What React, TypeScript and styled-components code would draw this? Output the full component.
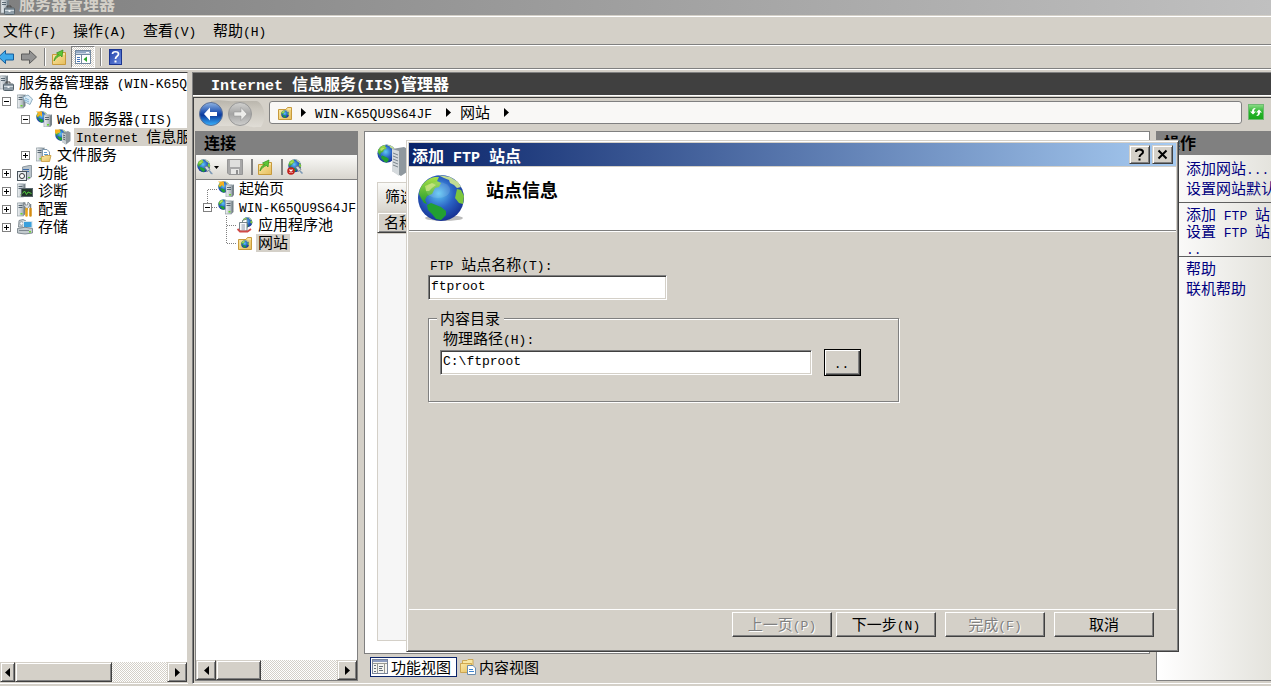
import React from "react";
import styled, { createGlobalStyle, css } from "styled-components";

const face = "#d4d0c8";
const cjk = `"Noto Sans CJK SC", sans-serif`;

const GlobalStyle = createGlobalStyle`
  *, *::before, *::after { box-sizing: border-box; }
  html, body { margin: 0; height: 100%; overflow: hidden; background: ${face}; }
  #root { height: 100%; }
  svg { display: block; flex: none; }
  button, input { font: inherit; color: inherit; margin: 0; border-radius: 0; }
  ul { list-style: none; margin: 0; padding: 0; }
`;

const raised = css`
  border: 1px solid;
  border-color: ${face} #404040 #404040 ${face};
  box-shadow: inset 1px 1px #fff, inset -1px -1px #808080;
`;

const Window = styled.div`
  position: relative;
  display: flex;
  flex-direction: column;
  height: 100vh;
  min-width: 900px;
  background: ${face};
  color: #000;
  font: 15px/18px ${cjk};
  overflow: hidden;
  white-space: pre;
`;

const Latin = styled.span`
  font-family: "Liberation Mono", monospace;
  font-size: 13px;
  line-height: 0;
`;

/* Western runs are set smaller than the Chinese ones, two to one em square. */
function T({ children }: { children: string }) {
  return (
    <span>
      {children.split(/([\u0020-\u007e]+)/).map((part, i) =>
        i % 2 ? <Latin key={i}>{part}</Latin> : part
      )}
    </span>
  );
}

/* ---------- icons ---------- */

const Defs = () => (
  <svg width="0" height="0" aria-hidden="true">
    <defs>
      <radialGradient id="sea" cx="0.45" cy="0.4" r="0.65">
        <stop offset="0" stopColor="#5fc8f4" />
        <stop offset="0.5" stopColor="#2a62c4" />
        <stop offset="1" stopColor="#142a8c" />
      </radialGradient>
      <linearGradient id="land" x1="0" y1="0" x2="0" y2="1">
        <stop offset="0" stopColor="#a8e048" />
        <stop offset="1" stopColor="#1f9a2c" />
      </linearGradient>
      <linearGradient id="metal" x1="0" y1="0" x2="1" y2="0">
        <stop offset="0" stopColor="#f0f3f5" />
        <stop offset="1" stopColor="#a3adb4" />
      </linearGradient>
      <linearGradient id="manila" x1="0" y1="0" x2="1" y2="1">
        <stop offset="0" stopColor="#fbeaa8" />
        <stop offset="1" stopColor="#e6bd5c" />
      </linearGradient>
      <linearGradient id="blueBall" x1="0" y1="0" x2="0" y2="1">
        <stop offset="0" stopColor="#8fb4e4" />
        <stop offset="0.45" stopColor="#1d4fae" />
        <stop offset="0.55" stopColor="#0c3a9c" />
        <stop offset="1" stopColor="#38b4ff" />
      </linearGradient>
      <linearGradient id="grayBall" x1="0" y1="0" x2="0" y2="1">
        <stop offset="0" stopColor="#d2d2d0" />
        <stop offset="0.5" stopColor="#a4a4a4" />
        <stop offset="1" stopColor="#cfcfcd" />
      </linearGradient>
      <linearGradient id="rail" x1="0" y1="0" x2="0" y2="1">
        <stop offset="0" stopColor="#b9b5ac" />
        <stop offset="0.3" stopColor="#c9c5bc" />
        <stop offset="1" stopColor="#e0ddd6" />
      </linearGradient>
      <linearGradient id="leaf" x1="0" y1="0" x2="0" y2="1">
        <stop offset="0" stopColor="#8fdd8a" />
        <stop offset="0.5" stopColor="#27b52b" />
        <stop offset="1" stopColor="#19a81a" />
      </linearGradient>
      <linearGradient id="help" x1="0" y1="0" x2="1" y2="1">
        <stop offset="0" stopColor="#2140a8" />
        <stop offset="1" stopColor="#6b8be0" />
      </linearGradient>
    </defs>
  </svg>
);

/* Globe of radius 23 around 24,24; callers scale it down. */
const GlobeArt = () => (
  <g>
    <circle cx="24" cy="24" r="23" fill="url(#sea)" />
    <path
      d="M3 15 C6 8 12 4 18 3 L22 3 L20 7 L24 9 L22 13 L18 14 L15 20 L10 22 L8 26 L10 30 L7 29 L4 24 L2 20 Z"
      fill="url(#land)"
    />
    <path d="M8 12 L15 9 L19 11 L15 14 L12 17 L9 17 Z" fill="#d0e67c" opacity="0.7" />
    <path d="M21 1 L33 3 L41 8 L44 13 L40 14 L37 11 L33 9 L32 6 L27 4 Z" fill="#c2dc94" />
    <path d="M10 31 L14 29 L19 31 L24 33 L29 37 L29 41 L24 46 L19 45 L15 40 L11 36 Z" fill="#22a032" />
    <path d="M40 15 L44 16 L47 22 L46 30 L42 29 L38 24 Z" fill="#7cc63e" />
  </g>
);

const globe = (x: number, y: number, scale: number) => (
  <g transform={`translate(${x} ${y}) scale(${scale})`}>
    <GlobeArt />
  </g>
);

const tower = (x: number, y: number, h = 13) => (
  <g transform={`translate(${x} ${y})`}>
    <path d="M0 1 L2 0 H8 V1 L7 2 H0Z" fill="#dfe4e7" />
    <rect x="0" y="1" width="6" height={h - 1} fill="url(#metal)" stroke="#8b969d" strokeWidth="0.600" />
    <path d={`M6 1.500 L8 0.500 V${h - 2} L6 ${h}Z`} fill="#78838a" />
    <path d="M1 3.500 H5 M1 5.500 H5" stroke="#4c5b68" strokeWidth="0.900" />
    <rect x="3" y={h - 3} width="2" height="1.500" fill="#6ad62e" />
  </g>
);

const folder = (x: number, y: number) => (
  <g transform={`translate(${x} ${y})`}>
    <path d="M0.500 2.500 H8 L9.500 0.500 H13.500 V12.500 H0.500 Z" fill="url(#manila)" stroke="#c79a3c" />
    <path d="M9.500 2 H13" stroke="#fff3c4" />
  </g>
);

const art: Record<string, React.ReactNode> = {
  manager: (
    <>
      {tower(2, 0, 14)}
      <path d="M8 8.500 V7 H12 V8.500" fill="none" stroke="#444" />
      <rect x="5.500" y="9" width="10" height="6.500" rx="1" fill="#8e9ca6" stroke="#56636b" />
      <path d="M6 11.500 H15" stroke="#cfd8de" />
      <rect x="9.500" y="11" width="2" height="2" fill="#eef2f4" />
    </>
  ),
  roles: (
    <>
      {tower(0.5, 1, 14)}
      <path d="M6 4 L11 2 L15.500 6 L13 11.500 L8 9 Z" fill="#dcecf6" stroke="#7a9db4" strokeWidth="0.800" />
      <path d="M8 5 L12 7 M8 7 L12 9" stroke="#6aa6cc" strokeWidth="0.800" />
    </>
  ),
  web: (
    <>
      {globe(0, 0, 0.25)}
      <path d="M0 0.500 H6 V6 L4 4 L2 6 L0.500 4.500 L2.500 2.500 Z" fill="#f6b020" />
      {tower(8, 3, 13)}
    </>
  ),
  iis: (
    <>
      {globe(0, 0, 0.25)}
      <path d="M0 0.500 H5 V4 L3.500 3 L1.500 5 L0 4Z" fill="#f6b020" />
      <path d="M7 4 L13 2 L15.500 3.500 V12 L11 15.500 L7 13 Z" fill="#8c969c" />
      <path d="M7 4 L11 5.500 V15.500 L7 13 Z" fill="#c9d0d4" />
      <path d="M8 6 L10.500 7 M8 8 L10.500 9 M8 10 L10.500 11" stroke="#56616a" />
    </>
  ),
  files: (
    <>
      {tower(0.5, 0, 14)}
      <path d="M6.500 2.500 H11 L13.500 5 V11 H6.500Z" fill="#fff" stroke="#7f97ad" />
      <path d="M8 5.500 H11 M8 7.500 H12" stroke="#5f9ad0" />
      <path d="M5.500 9.500 H8 L9 8.500 H15 L13.500 14.500 H5.500Z" fill="url(#manila)" stroke="#c79a3c" strokeWidth="0.800" />
    </>
  ),
  features: (
    <>
      <path d="M5.500 2 L12 0.500 H14.500 V12 L12 14 H5.500Z" fill="#b9c3ca" stroke="#7c8890" strokeWidth="0.800" />
      <path d="M6 4.500 H12 M6 6.500 H12" stroke="#3d6ba8" />
      <rect x="0.500" y="6.500" width="9" height="9" fill="#e6ebee" stroke="#4a545c" />
      <circle cx="5" cy="11" r="2.500" fill="#fff" stroke="#333" />
      <path d="M11 12.500 H13" stroke="#4dc63a" />
    </>
  ),
  diagnostics: (
    <>
      {tower(0.5, 0, 14)}
      <rect x="4.500" y="5.500" width="11" height="8" fill="#22362a" stroke="#59656c" />
      <path d="M5.500 10.500 L7.500 8 L9.500 11.500 L11 9 L14.500 10.500" fill="none" stroke="#55cf3f" />
    </>
  ),
  config: (
    <>
      {tower(0.5, 1, 14)}
      <path d="M7 1 L8 4 L10.500 4 L11 1 L13 3 L12 6 L10.500 7 V9 H8.500 V6.500 L6.500 4Z" fill="#dfe3e6" stroke="#6d777e" strokeWidth="0.700" />
      <path d="M9.500 8 V14.500" stroke="#e8a417" strokeWidth="2.500" strokeLinecap="round" />
      <path d="M13.500 3 V8" stroke="#7a848a" strokeWidth="1.500" />
      <path d="M13.500 8 V14.500" stroke="#d48c12" strokeWidth="2.500" strokeLinecap="round" />
    </>
  ),
  storage: (
    <>
      <path d="M2 1.500 L6 0.500 L9 2 V8 H1.500Z" fill="#cfd6da" stroke="#6d7880" strokeWidth="0.800" />
      <circle cx="4.500" cy="4.500" r="1.800" fill="#f4f6f7" stroke="#7d888f" strokeWidth="0.700" />
      <rect x="6.500" y="2.500" width="8.500" height="6" fill="#3aa0dc" stroke="#d8e4ea" />
      <path d="M0.500 9.500 Q8 7 15.500 9.500 V14 Q8 16 0.500 14Z" fill="#c4cbcf" stroke="#6d7880" strokeWidth="0.800" />
      <path d="M2 11.500 H12" stroke="#7d888f" />
      <rect x="12" y="12" width="2" height="1.500" fill="#6ad62e" />
    </>
  ),
  server: (
    <>
      {globe(0, 0, 0.23)}
      {tower(7.5, 1, 14)}
    </>
  ),
  pools: (
    <>
      {globe(5, 0, 0.22)}
      <path d="M5.500 3.500 L10 2 V11 H5.500Z" fill="#fff" stroke="#6a7880" strokeWidth="0.800" />
      <path d="M2.500 5.500 H10 V14 H2.500Z" fill="#f8fafb" stroke="#6a7880" strokeWidth="0.900" />
      <path d="M4.500 8 H8 M4.500 10 H8 M4.500 12 H8" stroke="#7f8aa0" strokeWidth="0.900" />
      <path d="M0.500 12 L3 14.500 H10.500 L14 12" fill="none" stroke="#d04a48" strokeWidth="1.800" />
    </>
  ),
  sites: (
    <>
      {folder(1, 2)}
      {globe(4, 5, 0.17)}
    </>
  ),
  up: (
    <>
      {folder(1, 3)}
      <path d="M3 12 C3.500 8.500 5 6.500 7.500 5.500 L5.500 4 L12 1 L11 8 L9.500 6.500 C6.500 7.500 5 9 3 12Z" fill="#5fc535" stroke="#2f9018" strokeWidth="0.700" />
    </>
  ),
  connect: (
    <>
      {globe(0, 0, 0.28)}
      <path d="M7.500 8 L10 7 L13 10.500 L10.500 12.500Z" fill="#cdd4d9" stroke="#6d7880" strokeWidth="0.800" />
      <path d="M12 12 C14 11.500 13 15 15.500 14.500" fill="none" stroke="#7b98b4" strokeWidth="1.500" />
    </>
  ),
  disconnect: (
    <>
      {globe(1, 0, 0.28)}
      <path d="M8.500 8 L11 7 L14 10.500 L11.500 12.500Z" fill="#cdd4d9" stroke="#6d7880" strokeWidth="0.800" />
      <path d="M13 12 L15.500 14.500" stroke="#7b98b4" strokeWidth="1.500" />
      <circle cx="4" cy="12" r="3.800" fill="#c4201c" />
      <path d="M2.500 10.500 L5.500 13.500 M5.500 10.500 L2.500 13.500" stroke="#fff" strokeWidth="1.200" />
    </>
  ),
  save: (
    <>
      <path d="M0.500 0.500 H15.500 V15.500 H2 L0.500 14Z" fill="#a8a8a8" stroke="#969696" />
      <rect x="3" y="1" width="10" height="7" fill="#e0e0de" />
      <rect x="4" y="10" width="8" height="5" fill="#e8e8e6" />
      <rect x="9" y="11" width="2" height="4" fill="#8f8f8f" />
    </>
  ),
  back: (
    <path d="M0.500 8 L7.500 1.500 V5 H15.500 V11 H7.500 V14.500Z" fill="#3fa9ea" stroke="#175f9c" />
  ),
  forward: (
    <path d="M15.500 8 L8.500 1.500 V5 H0.500 V11 H8.500 V14.500Z" fill="#939393" stroke="#5d5d5d" />
  ),
  pane: (
    <>
      <rect x="0.500" y="1.500" width="15" height="13" fill="#fff" stroke="#7389a0" />
      <rect x="1" y="2" width="14" height="2.500" fill="#93a9c4" />
      <path d="M11 3.500 H14" stroke="#fff" />
      <path d="M6.500 6 V14" stroke="#7389a0" />
      <path d="M1 5.500 H15" stroke="#7389a0" />
      <path d="M2 8.500 H5 M2 10.500 H5 M2 12.500 H5" stroke="#4473b8" />
      <path d="M12 7.500 V13 L8.500 10.250Z" fill="#2aa52c" />
    </>
  ),
  refresh: (
    <>
      <rect x="0.500" y="0.500" width="15" height="15" fill="url(#leaf)" stroke="#6fb972" />
      <path d="M2 7.500 L5 10.500 L8 7.500 H6 C6 5.500 7 4.500 8 4 C5.500 3.500 4 5 4 7.500Z" fill="#fff" />
      <path d="M14 8.500 L11 5.500 L8 8.500 H10 C10 10.500 9 11.500 8 12 C10.500 12.500 12 11 12 8.500Z" fill="#fff" />
    </>
  ),
  featureView: (
    <>
      <rect x="0.500" y="0.500" width="15" height="14" fill="#f4f4f0" stroke="#77839a" />
      <path d="M1 2 H15" stroke="#8d9cc0" strokeWidth="2" />
      <path d="M1 4.500 H15 M5.500 5 V14 M12.500 5 V14" stroke="#9a9a94" />
      <path d="M2 6.500 H4 M2 9.500 H4 M2 12.500 H4 M7 7.500 H11 M7 9.500 H10 M7 11.500 H11" stroke="#66717c" />
    </>
  ),
  contentView: (
    <>
      <path d="M2.500 1.500 H7 L8 0.500 H13 V8 H2.500Z" fill="#f8e7a4" stroke="#c79a3c" strokeWidth="0.800" />
      <path d="M0.500 4.500 H11.500 V13.500 H0.500Z" fill="url(#manila)" stroke="#c79a3c" strokeWidth="0.800" />
      <path d="M7.500 6.500 H13 L15.500 9 V15.500 H7.500Z" fill="#fff" stroke="#6a8cae" />
      <path d="M9 10.500 H13 M9 12.500 H14" stroke="#3f86d0" />
    </>
  ),
};

function Icon({ name, clipLeft = 0 }: { name: string; clipLeft?: number }) {
  return (
    <svg width={16 - clipLeft} height="16" viewBox={`${clipLeft} 0 ${16 - clipLeft} 16`} aria-hidden="true">
      {art[name]}
    </svg>
  );
}

const Triangle = ({ dir }: { dir: "left" | "right" | "down" }) => (
  <svg width="7" height="9" viewBox="0 0 7 9" aria-hidden="true">
    <path
      d={dir === "left" ? "M6 0 V9 L1 4.500Z" : dir === "right" ? "M1 0 V9 L6 4.500Z" : "M1 3 H6 L3.500 6Z"}
      fill="#000"
    />
  </svg>
);

/* ---------- window frame ---------- */

const TitleBar = styled.header`
  display: flex;
  align-items: flex-end;
  gap: 4px;
  flex: none;
  height: 15px;
  overflow: hidden;
  background: linear-gradient(90deg, #808080, #c0c0c0);
  color: ${face};
  font-size: 16px;
  font-weight: bold;
  line-height: 24px;
`;

const MenuBar = styled.nav`
  display: flex;
  align-items: center;
  gap: 16px;
  flex: none;
  height: 29px;
  margin-top: 1px;
  padding: 0 0 2px 3px;
  border-top: 1px solid #fff;
  border-bottom: 1px solid #808080;
`;

const PlainButton = styled.button`
  display: flex;
  align-items: center;
  padding: 0;
  border: 0;
  background: none;
`;

const MenuItem = styled(PlainButton)`
  min-width: 54px;
`;

const ToolBar = styled.div`
  display: flex;
  align-items: center;
  flex: none;
  height: 24px;
  border-top: 1px solid #fff;
  border-bottom: 1px solid #808080;
`;

const Group = styled.div<{ $gap?: number; $pad?: number }>`
  display: flex;
  align-items: center;
  gap: ${(p) => p.$gap ?? 4}px;
  padding: 0 ${(p) => p.$pad ?? 7}px;
  &:first-child { padding-left: 0; }
`;

const Divider = styled.i`
  width: 2px;
  height: 18px;
  border-left: 1px solid #808080;
  border-right: 1px solid #fff;
`;

const PressedButton = styled(PlainButton)`
  justify-content: center;
  width: 24px;
  height: 22px;
  border: 1px solid;
  border-color: #808080 #fff #fff #808080;
  background: conic-gradient(#fff 25%, ${face} 0 50%, #fff 0 75%, ${face} 0) 0 0 / 2px 2px;
`;

const Workspace = styled.div`
  display: flex;
  flex: 1;
  gap: 4px;
  min-height: 0;
  padding: 2px 0;
  border-top: 1px solid #fff;
`;

/* ---------- trees ---------- */

const TreePane = styled.aside`
  display: flex;
  flex-direction: column;
  flex: none;
  width: 188px;
  margin-bottom: 1px;
  padding-top: 1px;
  border: solid;
  border-width: 1px 1px 1px 0;
  border-color: #404040 ${face} ${face} ${face};
  box-shadow: 0 1px #fff;
  background: #fff;
`;

const Tree = styled.ul`
  flex: 1;
  min-height: 0;
  overflow: hidden;
`;

const TreeRow = styled.li<{ $indent: number }>`
  display: flex;
  align-items: center;
  height: 18px;
  padding-left: ${(p) => p.$indent}px;
  overflow: hidden;
`;

const Handle = styled.span`
  flex: none;
  width: 15px;
`;

const Label = styled.span<{ $selected?: boolean }>`
  height: 18px;
  margin-left: 3px;
  padding: 0 2px;
  background: ${(p) => (p.$selected ? face : "transparent")};
  line-height: 15px;
`;

type Line = "none" | "start" | "middle" | "end";

function TreeHandle({ box, line = "none" }: { box?: "+" | "-"; line?: Line }) {
  return (
    <Handle>
      <svg width="15" height="18" viewBox="0 0 15 18" aria-hidden="true">
        <g stroke="#808080" strokeDasharray="1 1" fill="none">
          {line !== "none" && <path d="M5 9.500 H15" />}
          {(line === "start" || line === "middle") && <path d="M4.500 10 V18" />}
          {(line === "middle" || line === "end") && <path d="M4.500 0 V9" />}
        </g>
        {box && (
          <>
            <rect x="0.500" y="5.500" width="8" height="8" fill="#fff" stroke="#808080" />
            <path d="M2 9.500 H7" stroke="#000" />
            {box === "+" && <path d="M4.500 7 V12" stroke="#000" />}
          </>
        )}
      </svg>
    </Handle>
  );
}

interface Node {
  text: string;
  icon: string;
  depth: number;
  box?: "+" | "-";
  line?: Line;
  selected?: boolean;
}

const serverTree: Node[] = [
  { text: "角色", icon: "roles", depth: 0, box: "-" },
  { text: "Web 服务器(IIS)", icon: "web", depth: 1, box: "-" },
  { text: "Internet 信息服", icon: "iis", depth: 2, selected: true },
  { text: "文件服务", icon: "files", depth: 1, box: "+" },
  { text: "功能", icon: "features", depth: 0, box: "+" },
  { text: "诊断", icon: "diagnostics", depth: 0, box: "+" },
  { text: "配置", icon: "config", depth: 0, box: "+" },
  { text: "存储", icon: "storage", depth: 0, box: "+" },
];

const siteTree: Node[] = [
  { text: "起始页", icon: "web", depth: 0, line: "start" },
  { text: "WIN-K65QU9S64JF", icon: "server", depth: 0, box: "-", line: "end" },
  { text: "应用程序池", icon: "pools", depth: 1, line: "middle" },
  { text: "网站", icon: "sites", depth: 1, line: "end", selected: true },
];

function Nodes({ items, base }: { items: Node[]; base: number }) {
  return (
    <>
      {items.map((n) => (
        <TreeRow key={n.text} $indent={base + n.depth * 19}>
          <TreeHandle box={n.box} line={n.line} />
          <Icon name={n.icon} />
          <Label $selected={n.selected}>
            <T>{n.text}</T>
          </Label>
        </TreeRow>
      ))}
    </>
  );
}

/* ---------- scroll bars ---------- */

const ScrollTrack = styled.div`
  display: flex;
  flex: none;
  height: 20px;
  background: conic-gradient(#fff 25%, ${face} 0 50%, #fff 0 75%, ${face} 0) 0 0 / 2px 2px;
`;

const ScrollButton = styled(PlainButton)<{ $width?: number }>`
  justify-content: center;
  width: ${(p) => p.$width ?? 20}px;
  background: ${face};
  ${raised}
`;

const ScrollThumb = styled.div<{ $share: number }>`
  width: ${(p) => p.$share}%;
  background: ${face};
  ${raised}
`;

const Spacer = styled.div`
  flex: 1;
`;

function ScrollBar({ share, first }: { share: number; first?: number }) {
  return (
    <ScrollTrack>
      <ScrollButton $width={first} aria-label="向左滚动"><Triangle dir="left" /></ScrollButton>
      <ScrollThumb $share={share} />
      <Spacer />
      <ScrollButton aria-label="向右滚动"><Triangle dir="right" /></ScrollButton>
    </ScrollTrack>
  );
}

/* ---------- IIS manager ---------- */

const Manager = styled.main`
  display: flex;
  flex-direction: column;
  flex: 1;
  min-width: 0;
  border: 1px solid #808080;
  border-width: 1px 0 0 1px;
  border-bottom: 1px solid #fff;
`;

const ManagerTitle = styled.h1`
  flex: none;
  height: 23px;
  margin: 0;
  padding-left: 18px;
  border-bottom: 1px solid #fff;
  background: #404040;
  color: #fff;
  font-size: 16px;
  font-weight: bold;
  line-height: 20px;
  ${Latin} { font-size: 15px; }
`;

const ManagerBody = styled.div`
  display: flex;
  flex-direction: column;
  flex: 1;
  min-height: 0;
  margin-top: 1px;
  padding: 0 0 2px 1px;
  border: solid #404040;
  border-width: 1px 0 0 1px;
`;

const NavBar = styled.div`
  display: flex;
  align-items: center;
  flex: none;
  height: 33px;
  padding: 0 7px 0 4px;
`;

const Address = styled.div`
  display: flex;
  align-items: center;
  flex: 1;
  height: 23px;
  margin: 0 6px 4px 2px;
  padding-left: 7px;
  gap: 7px;
  border: 1px solid #808080;
  border-radius: 3px;
  background: #f9f8f6;
`;

const Crumb = styled.span`
  height: 18px;
  margin: 0 6px 0 1px;
  line-height: 16px;
`;

const RefreshButton = styled(PlainButton)`
  margin-bottom: 6px;
`;

const Columns = styled.div`
  display: flex;
  flex: 1;
  gap: 6px;
  min-height: 0;
`;

const Connections = styled.section`
  display: flex;
  flex-direction: column;
  flex: none;
  width: 163px;
  border: 1px solid #808080;
  border-top: 0;
  background: #fff;
`;

const PanelTitle = styled.h2`
  flex: none;
  height: 24px;
  margin: 0;
  padding-left: 8px;
  background: #808080;
  font-size: 16px;
  font-weight: bold;
  line-height: 22px;
`;

const ConnectionTools = styled.div`
  display: flex;
  align-items: center;
  flex: none;
  height: 25px;
  padding-left: 1px;
  border-bottom: 1px solid #808080;
  background: linear-gradient(#fafaf8, #d8d5ce);
`;

const Bar = styled.i`
  width: 2px;
  height: 16px;
  margin: 0 4px 0 8px;
  background: #808080;
`;

const Center = styled.section`
  display: flex;
  flex-direction: column;
  flex: 1;
  min-width: 0;
`;

const Sheet = styled.div`
  display: flex;
  flex-direction: column;
  flex: 1;
  min-height: 0;
  padding: 12px;
  border: 1px solid #808080;
  background: #fff;
`;

const FilterBar = styled.div`
  height: 30px;
  margin-top: 6px;
  padding-left: 7px;
  border: 1px solid ${face};
  background: linear-gradient(#fafaf8, #d8d5ce);
  line-height: 26px;
`;

const ListHead = styled.div`
  height: 21px;
  padding-left: 6px;
  background: ${face};
  line-height: 17px;
  ${raised}
`;

const ListBody = styled.div`
  flex: 1;
  border: 1px solid ${face};
  background: #f6f6f6;
`;

const ViewTabs = styled.div`
  display: flex;
  align-items: flex-start;
  flex: none;
  gap: 1px;
  height: 27px;
  padding: 3px 0 0 6px;
`;

const ViewTab = styled(PlainButton)<{ $active?: boolean }>`
  gap: 3px;
  height: 20px;
  padding: 0 5px 1px 1px;
  border: 1px solid ${(p) => (p.$active ? "#0a246a" : "transparent")};
  background: ${(p) => (p.$active ? "#fff" : "transparent")};
  line-height: 16px;
`;

const Actions = styled.aside`
  display: flex;
  flex-direction: column;
  flex: none;
  width: 115px;
  overflow: hidden;
`;

const ActionList = styled.div`
  flex: 1;
  border: 1px solid #808080;
  border-width: 0 0 1px 1px;
  background: linear-gradient(90deg, #fff, #e4e3dd);
`;

const ActionGroup = styled.div<{ $tight?: boolean }>`
  display: flex;
  flex-direction: column;
  gap: ${(p) => (p.$tight ? 0 : 2)}px;
  padding: ${(p) => (p.$tight ? "2px 0 0 29px" : "4px 0 5px 29px")};
  line-height: ${(p) => (p.$tight ? 17 : 18)}px;
  & + & { border-top: 1px solid #606060; }
  & + & + & { padding-top: 2px; }
`;

const ActionLink = styled.a`
  color: #000080;
  text-decoration: none;
`;

/* ---------- dialog ---------- */

const Dialog = styled.div`
  position: absolute;
  inset: 140px 92px 34px 406px;
  display: flex;
  flex-direction: column;
  padding: 1px;
  background: ${face};
  ${raised}
`;

const DialogTitle = styled.div`
  display: flex;
  align-items: center;
  flex: none;
  gap: 2px;
  height: 23px;
  margin: 1px 1px 0;
  padding: 0 3px;
  background: linear-gradient(90deg, #0a246a, #a6caf0);
  color: #fff;
  font-size: 16px;
  font-weight: bold;
  line-height: 16px;
  ${Latin} { font-size: 15px; }
`;

const CaptionButton = styled(PlainButton)`
  justify-content: center;
  width: 21px;
  height: 19px;
  background: ${face};
  color: #000;
  ${raised}
`;

const Banner = styled.div`
  display: flex;
  flex: none;
  gap: 22px;
  height: 64px;
  padding: 7px 8px;
  margin: 1px 1px 0;
  border-bottom: 1px solid #808080;
  background: #fff;
`;

const BannerTitle = styled.h2`
  margin: 2px 0 0;
  font-size: 18px;
  font-weight: bold;
  line-height: 26px;
`;

const Form = styled.form`
  display: flex;
  flex-direction: column;
  align-items: flex-start;
  flex: 1;
  min-height: 0;
  margin: 0 1px;
  padding: 24px 19px 0;
  border-top: 1px solid #fff;
`;

const FieldLabel = styled.label<{ $inset?: number }>`
  display: block;
  height: 18px;
  margin-bottom: 1px;
  padding-left: ${(p) => p.$inset ?? 2}px;
  line-height: 16px;
`;

const Field = styled.input<{ $width: number }>`
  width: ${(p) => p.$width}px;
  height: 25px;
  padding: 0 2px 2px;
  border: 1px solid;
  border-color: #808080 #fff #fff #808080;
  outline: 0;
  background: #fff;
  box-shadow: inset 1px 1px #404040, inset -1px -1px ${face};
  font-family: "Liberation Mono", monospace;
  font-size: 13px;
`;

const Directory = styled.fieldset`
  width: 471px;
  height: 91px;
  margin: 11px 0 0;
  padding: 5px 11px 0;
  border: 1px solid #808080;
  box-shadow: 1px 1px #fff, inset 1px 1px #fff;
`;

const Legend = styled.legend`
  margin-left: -3px;
  padding: 0 4px 0 3px;
  background: ${face};
  line-height: 14px;
`;

const PathRow = styled.div`
  display: flex;
  align-items: center;
  gap: 12px;
`;

const BrowseButton = styled.button`
  width: 37px;
  height: 27px;
  padding: 0 2px 2px 0;
  border: 1px solid #000;
  background: ${face};
  box-shadow: inset 1px 1px #fff, inset -1px -1px #404040, inset -2px -2px #808080;
`;

const Footer = styled.div`
  display: flex;
  flex: none;
  justify-content: flex-end;
  gap: 9px;
  height: 41px;
  margin: 0 1px;
  padding: 2px 22px 0;
  border-top: 1px solid #fff;
`;

const Pair = styled.div`
  display: flex;
  gap: 4px;
`;

const PushButton = styled.button`
  width: 100px;
  height: 25px;
  padding: 0 0 2px;
  border: 1px solid;
  border-color: #fff #404040 #404040 #fff;
  background: ${face};
  box-shadow: inset -1px -1px #808080;
  &:disabled {
    color: #808080;
    text-shadow: 1px 1px #fff;
  }
`;

const NavBalls = () => (
  <svg width="68" height="33" viewBox="0 0 68 33" aria-hidden="true">
    <path d="M12 3 C24 1 28 4 36 3 H56 C60 3 61 5 63 8 C66 14 67 20 62 29 H57 C50 30 52 27 42 28 H12Z" fill="url(#rail)" />
    <circle cx="12" cy="16" r="11.500" fill="url(#blueBall)" stroke="#5a6f96" />
    <path d="M5 16 L11 9.500 V14 H18 V18 H11 V22.500Z" fill="#fff" />
    <circle cx="41" cy="16" r="11.500" fill="url(#grayBall)" stroke="#999" />
    <path d="M48 16 L42 9.500 V14 H35 V18 H42 V22.500Z" fill="#ececea" stroke="#8c8c8c" strokeWidth="0.500" />
  </svg>
);

export default function App() {
  return (
    <Window>
      <GlobalStyle />
      <Defs />
      <TitleBar>
        <Icon name="manager" clipLeft={1} />
        <span>服务器管理器</span>
      </TitleBar>
      <MenuBar>
        {["文件(F)", "操作(A)", "查看(V)", "帮助(H)"].map((m) => (
          <MenuItem key={m}><T>{m}</T></MenuItem>
        ))}
      </MenuBar>
      <ToolBar>
        <Group $gap={7}>
          <PlainButton aria-label="后退"><Icon name="back" clipLeft={2} /></PlainButton>
          <PlainButton aria-label="前进"><Icon name="forward" /></PlainButton>
        </Group>
        <Divider />
        <Group $pad={5}>
          <PlainButton aria-label="向上"><Icon name="up" /></PlainButton>
          <PressedButton aria-label="显示/隐藏控制台树"><Icon name="pane" /></PressedButton>
        </Group>
        <Divider />
        <Group>
          <PlainButton aria-label="帮助主题">
            <svg width="13" height="16" viewBox="0 0 13 16" aria-hidden="true">
              <rect x="0.500" y="0.500" width="12" height="15" fill="url(#help)" stroke="#1c3590" />
              <path d="M3.500 5 C3.500 2 9.500 2 9.500 5 C9.500 7.500 6.500 7 6.500 10" fill="none" stroke="#fff" strokeWidth="1.700" />
              <rect x="5.500" y="11.500" width="2" height="2" fill="#fff" />
            </svg>
          </PlainButton>
        </Group>
      </ToolBar>

      <Workspace>
        <TreePane>
          <Tree>
            <TreeRow $indent={0}>
              <Icon name="manager" clipLeft={2} />
              <Label><T>服务器管理器 (WIN-K65Q</T></Label>
            </TreeRow>
            <Nodes items={serverTree} base={2} />
          </Tree>
          <ScrollBar share={52} first={15} />
        </TreePane>

        <Manager>
          <ManagerTitle><T>Internet 信息服务(IIS)管理器</T></ManagerTitle>
          <ManagerBody>
            <NavBar>
              <NavBalls />
              <Address>
                <Icon name="sites" />
                <Triangle dir="right" />
                <Crumb><T>WIN-K65QU9S64JF</T></Crumb>
                <Triangle dir="right" />
                <Crumb>网站</Crumb>
                <Triangle dir="right" />
              </Address>
              <RefreshButton aria-label="刷新"><Icon name="refresh" /></RefreshButton>
            </NavBar>
            <Columns>
              <Connections>
                <PanelTitle>连接</PanelTitle>
                <ConnectionTools>
                  <Group $gap={7} $pad={0}>
                    <PlainButton aria-label="连接到服务器"><Icon name="connect" /><Triangle dir="down" /></PlainButton>
                    <PlainButton aria-label="保存连接"><Icon name="save" /></PlainButton>
                  </Group>
                  <Bar />
                  <PlainButton aria-label="上移"><Icon name="up" /></PlainButton>
                  <Bar />
                  <PlainButton aria-label="断开连接"><Icon name="disconnect" /></PlainButton>
                </ConnectionTools>
                <Tree><Nodes items={siteTree} base={7} /></Tree>
                <ScrollBar share={28} />
              </Connections>

              <Center>
                <Sheet>
                  <svg width="34" height="32" viewBox="0 0 34 32" aria-hidden="true">
                    {globe(0, 0, 0.4)}
                    <path d="M15 5 L27 3 L33 6 V26 L24 32 L15 27Z" fill="#8f989e" />
                    <path d="M15 5 L22 7 V32 L15 27Z" fill="#d5dadd" />
                    <path d="M16 9 L21 11 M16 12 L21 14 M16 15 L21 17 M16 18 L21 20 M16 21 L21 23" stroke="#7a858d" />
                  </svg>
                  <FilterBar>筛选</FilterBar>
                  <ListHead>名称</ListHead>
                  <ListBody />
                </Sheet>
                <ViewTabs>
                  <ViewTab $active><Icon name="featureView" />功能视图</ViewTab>
                  <ViewTab><Icon name="contentView" />内容视图</ViewTab>
                </ViewTabs>
              </Center>

              <Actions>
                <PanelTitle>操作</PanelTitle>
                <ActionList>
                  <ActionGroup>
                    <ActionLink href="#add-site"><T>添加网站...</T></ActionLink>
                    <ActionLink href="#site-defaults">设置网站默认</ActionLink>
                  </ActionGroup>
                  <ActionGroup $tight>
                    <ActionLink href="#add-ftp"><T>添加 FTP 站</T></ActionLink>
                    <ActionLink href="#ftp-defaults"><T>{"设置 FTP 站\n.."}</T></ActionLink>
                  </ActionGroup>
                  <ActionGroup>
                    <ActionLink href="#help">帮助</ActionLink>
                    <ActionLink href="#online-help">联机帮助</ActionLink>
                  </ActionGroup>
                </ActionList>
              </Actions>
            </Columns>
          </ManagerBody>
        </Manager>
      </Workspace>

      <Dialog role="dialog" aria-label="添加 FTP 站点">
        <DialogTitle>
          <T>添加 FTP 站点</T>
          <Spacer />
          <CaptionButton aria-label="帮助">
            <svg width="11" height="13" viewBox="0 0 11 13" aria-hidden="true">
              <path d="M2 4 C2 0.500 9 0.500 9 4 C9 6.500 5.500 6 5.500 9" fill="none" stroke="#000" strokeWidth="2" />
              <rect x="4.500" y="10.500" width="2" height="2" />
            </svg>
          </CaptionButton>
          <CaptionButton aria-label="关闭">
            <svg width="11" height="11" viewBox="0 0 11 11" aria-hidden="true">
              <path d="M1.500 1.500 L9.500 9.500 M9.500 1.500 L1.500 9.500" stroke="#000" strokeWidth="2" />
            </svg>
          </CaptionButton>
        </DialogTitle>
        <Banner>
          <svg width="47" height="48" viewBox="0 0 47 48" aria-hidden="true">
            <ellipse cx="27" cy="44" rx="19" ry="3" fill="#bcbcbc" />
            <GlobeArt />
            <ellipse cx="21" cy="16" rx="12" ry="8" fill="#fff" opacity="0.120" />
          </svg>
          <BannerTitle>站点信息</BannerTitle>
        </Banner>
        <Form id="site-form" onSubmit={(e) => e.preventDefault()}>
          <FieldLabel htmlFor="site-name"><T>FTP 站点名称(T):</T></FieldLabel>
          <Field id="site-name" $width={239} defaultValue="ftproot" />
          <Directory>
            <Legend>内容目录</Legend>
            <FieldLabel htmlFor="site-path" $inset={3}><T>物理路径(H):</T></FieldLabel>
            <PathRow>
              <Field id="site-path" $width={372} defaultValue="C:\ftproot" />
              <BrowseButton type="button"><T>..</T></BrowseButton>
            </PathRow>
          </Directory>
        </Form>
        <Footer>
          <Pair>
            <PushButton disabled><T>上一页(P)</T></PushButton>
            <PushButton form="site-form"><T>下一步(N)</T></PushButton>
          </Pair>
          <PushButton disabled><T>完成(F)</T></PushButton>
          <PushButton><T>取消</T></PushButton>
        </Footer>
      </Dialog>
    </Window>
  );
}
